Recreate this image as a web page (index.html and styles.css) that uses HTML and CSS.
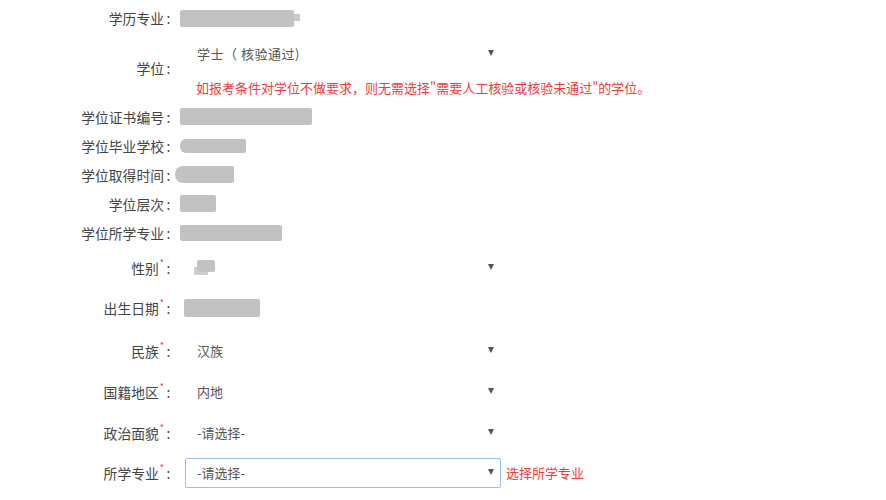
FILE: index.html
```html
<!DOCTYPE html>
<html lang="zh">
<head>
<meta charset="utf-8">
<title>学位信息</title>
<link rel="stylesheet" href="styles.css">
</head>
<body>
<div class="form">
  <div class="row r1">
    <div class="label">学历专业<span class="colon">:</span></div>
    <div class="value"><span class="blur b1"><i class="tail"></i></span></div>
  </div>
  <div class="row r2">
    <div class="label">学位<span class="colon">:</span></div>
    <div class="value stack">
      <div class="select plain"><span class="opt">学士（ 核验通过)</span><span class="arrow"></span></div>
      <div class="tip">如报考条件对学位不做要求，则无需选择"需要人工核验或核验未通过"的学位。</div>
    </div>
  </div>
  <div class="row r3">
    <div class="label">学位证书编号<span class="colon">:</span></div>
    <div class="value"><span class="blur b3"></span></div>
  </div>
  <div class="row r3">
    <div class="label">学位毕业学校<span class="colon">:</span></div>
    <div class="value"><span class="blur b4"></span></div>
  </div>
  <div class="row r3">
    <div class="label">学位取得时间<span class="colon">:</span></div>
    <div class="value"><span class="blur b5"></span></div>
  </div>
  <div class="row r3">
    <div class="label">学位层次<span class="colon">:</span></div>
    <div class="value"><span class="blur b6"></span></div>
  </div>
  <div class="row r3">
    <div class="label">学位所学专业<span class="colon">:</span></div>
    <div class="value"><span class="blur b7"></span></div>
  </div>
  <div class="row sel m6">
    <div class="label">性别<sup class="req">*</sup><span class="colon">:</span></div>
    <div class="value"><div class="select plain"><span class="blur b8"></span><span class="arrow"></span></div></div>
  </div>
  <div class="row sel m10">
    <div class="label">出生日期<sup class="req">*</sup><span class="colon">:</span></div>
    <div class="value"><span class="blur b9"></span></div>
  </div>
  <div class="row sel m13">
    <div class="label">民族<sup class="req">*</sup><span class="colon">:</span></div>
    <div class="value"><div class="select plain"><span class="opt">汉族</span><span class="arrow"></span></div></div>
  </div>
  <div class="row sel m11">
    <div class="label">国籍地区<sup class="req">*</sup><span class="colon">:</span></div>
    <div class="value"><div class="select plain"><span class="opt">内地</span><span class="arrow"></span></div></div>
  </div>
  <div class="row sel m11">
    <div class="label">政治面貌<sup class="req">*</sup><span class="colon">:</span></div>
    <div class="value"><div class="select plain"><span class="opt">-请选择-</span><span class="arrow"></span></div></div>
  </div>
  <div class="row sel m10">
    <div class="label">所学专业<sup class="req">*</sup><span class="colon">:</span></div>
    <div class="value inline"><div class="select focus"><span class="opt">-请选择-</span><span class="arrow"></span></div><span class="err">选择所学专业</span></div>
  </div>
</div>
</body>
</html>
```

FILE: styles.css
```css
* { box-sizing: border-box; }
html, body { margin: 0; padding: 0; background: #fff; }
body {
  font-family: "Noto Sans CJK SC", "Microsoft YaHei", sans-serif;
  font-size: 13px;
  color: #444;
}
.form {
  display: flex;
  flex-direction: column;
  padding-top: 4px;
}
.row {
  display: grid;
  grid-template-columns: 177px 1fr;
  align-items: center;
}
.r1 { height: 28px; }
.r2 { height: 58px; margin-top: 7px; }
.r3 { height: 29px; }
.r2 + .r3 { margin-top: 5px; }
.sel { height: 30px; }
.m6 { margin-top: 6px; }
.m10 { margin-top: 10px; }
.m11 { margin-top: 11px; }
.m13 { margin-top: 13px; }

.label {
  text-align: right;
  color: #444;
  white-space: nowrap;
  line-height: 18px;
  font-size: 13.8px;
  padding-right: 5px;
}
.colon {
  display: inline-block;
  width: 7px;
  text-align: center;
  margin-left: 1px;
}
.req {
  color: #f33;
  font-size: 9px;
  vertical-align: top;
  position: relative;
  top: -1px;
  line-height: 1;
  margin-left: 1px;
}
.value {
  padding-left: 3px;
  display: flex;
  align-items: center;
}
.value.stack {
  flex-direction: column;
  align-items: flex-start;
  padding-left: 8px;
  gap: 10px;
}
.value.inline { padding-left: 8px; gap: 5px; }
.sel .value { padding-left: 8px; }
.sel .value .b9 { margin-left: -1px; }

.select {
  width: 316px;
  height: 30px;
  border: 1px solid transparent;
  display: flex;
  align-items: center;
  justify-content: space-between;
  padding: 0 6px 0 11px;
  color: #555;
}
.select.focus {
  border-color: #9dbde9;
  border-radius: 2px;
}
.opt { line-height: 18px; }
.r2 .opt { letter-spacing: 0.5px; }
.arrow {
  width: 0;
  height: 0;
  border-left: 3.5px solid transparent;
  border-right: 3.5px solid transparent;
  border-top: 6px solid #555;
  margin-top: -3px;
}
.tip {
  color: #f43a3a;
  padding-left: 11px;
  line-height: 18px;
  white-space: nowrap;
}
.err { color: #f43a3a; line-height: 18px; }

.blur {
  display: inline-block;
  background: #c2c2c2;
  border-radius: 2px;
}
.b1 { width: 114px; height: 17px; position: relative; }
.b1 .tail {
  position: absolute;
  right: -6px;
  top: 4px;
  width: 6px;
  height: 7px;
  background: #c9c9c9;
}
.b3 { width: 132px; height: 17px; }
.b4 { width: 66px; height: 14px; border-radius: 6px 2px 2px 6px; }
.b5 { width: 59px; height: 17px; margin-left: -5px; border-radius: 8px 2px 2px 8px; }
.b6 { width: 36px; height: 17px; }
.b7 { width: 102px; height: 16px; }
.b8 { width: 18px; height: 12px; margin-left: 0; margin-top: -4px; margin-right: auto; box-shadow: -5px 5px 0 -2px #cfcfcf; }
.b9 { width: 76px; height: 18px; }
```
